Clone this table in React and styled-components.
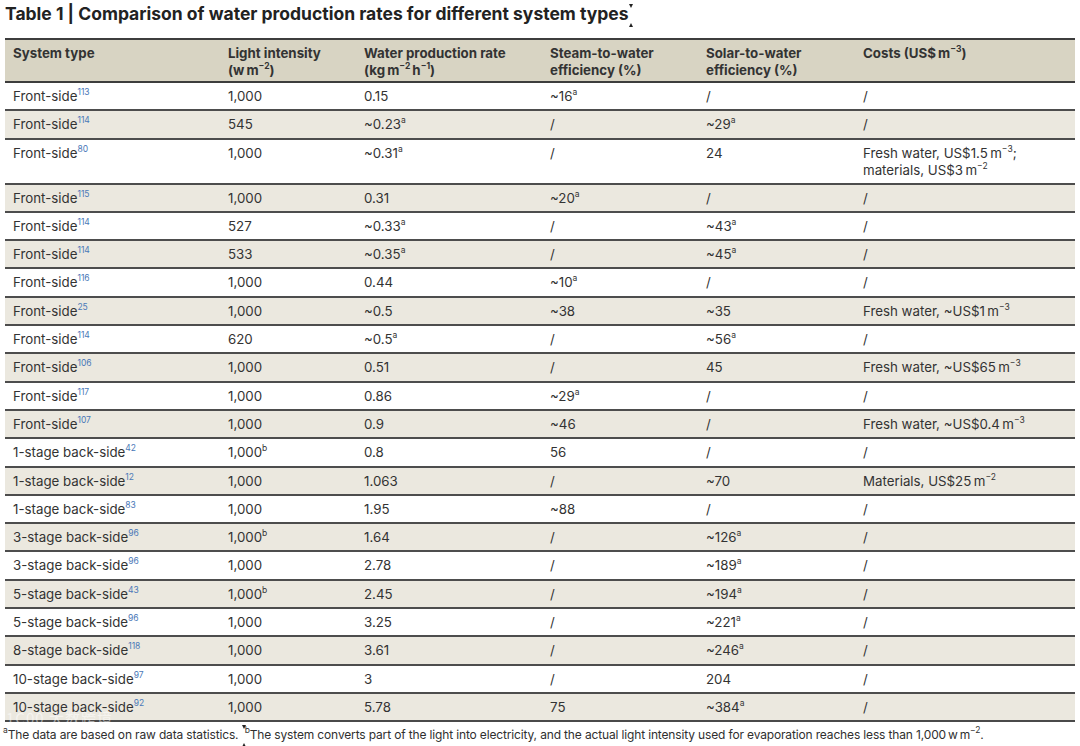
import React from "react";
import styled, { createGlobalStyle } from "styled-components";

const Global = createGlobalStyle`
  body {
    margin: 0;
    background: #ffffff;
    font-family: Inter, "Liberation Sans", Arial, sans-serif;
    color: #2f2f2f;
  }
`;

const Page = styled.div`
  position: relative;
  width: 1080px;
  height: 746px;
  padding: 0 5px;
  box-sizing: border-box;
  overflow: hidden;
`;

const Title = styled.h1`
  margin: 0;
  padding-top: 3px;
  height: 38px;
  box-sizing: border-box;
  font-size: 17.5px;
  font-weight: 700;
  color: #222;
`;

const Anchor = styled.span`
  position: relative;
  display: inline-block;
  width: ${(p) => p.w || 0}px;
  height: 1px;
`;

const Marker = styled.span`
  position: absolute;
  left: 0;
  top: ${(p) => p.y}px;
  width: 0;
  height: 0;
  border-left: 2.5px solid transparent;
  border-right: 2.5px solid transparent;
  ${(p) =>
    p.up
      ? "border-bottom: 4px solid #222;"
      : "border-top: 4px solid #222;"}
`;

const Table = styled.table`
  width: 1070px;
  border-collapse: collapse;
  table-layout: fixed;
  font-size: 13.3px;
  border-bottom: 2px solid #4a4a4a;
`;

const HeadRow = styled.tr`
  background: #d8d4c3;
  border-top: 2px solid #3d3d3d;
  border-bottom: 2px solid #3d3d3d;
`;

const Th = styled.th`
  text-align: left;
  vertical-align: top;
  font-weight: 700;
  color: #333;
  padding: 5px 6px 0 8px;
  height: 36px;
  line-height: 17px;
`;

const Row = styled.tr`
  background: ${(p) => (p.shaded ? "#ebe8df" : "#ffffff")};
  border-top: 2px solid #4d4d4d;
`;

const Td = styled.td`
  vertical-align: top;
  padding: 5px 6px 4px 8px;
  height: 17.3px;
  line-height: 17px;
  color: #333;
`;

const Ref = styled.sup`
  font-size: 8.5px;
  line-height: 0;
  color: #4a78b8;
  vertical-align: 6px;
`;

const Note = styled.sup`
  font-size: 8.5px;
  line-height: 0;
  vertical-align: 6px;
`;

const Footer = styled.p`
  margin: 5px 0 0 -2px;
  font-size: 12px;
  color: #2f2f2f;
  letter-spacing: -0.15px;
  white-space: nowrap;
`;

const Watermark = styled.span`
  position: absolute;
  left: 6px;
  top: 707px;
  font-family: "Noto Sans CJK SC", sans-serif;
  font-size: 15px;
  color: rgba(255, 255, 255, 0.5);
  letter-spacing: 1px;
  pointer-events: none;
`;

const S = ({ children }) => <Note>{children}</Note>;

const rows = [
  ["Front-side", "113", "1,000", "0.15", <>~16<S>a</S></>, "/", "/"],
  ["Front-side", "114", "545", <>~0.23<S>a</S></>, "/", <>~29<S>a</S></>, "/"],
  ["Front-side", "80", "1,000", <>~0.31<S>a</S></>, "/", "24",
    <>Fresh water, US$1.5{"\u2009"}m<S>−3</S>;<br />materials, US$3{"\u2009"}m<S>−2</S></>],
  ["Front-side", "115", "1,000", "0.31", <>~20<S>a</S></>, "/", "/"],
  ["Front-side", "114", "527", <>~0.33<S>a</S></>, "/", <>~43<S>a</S></>, "/"],
  ["Front-side", "114", "533", <>~0.35<S>a</S></>, "/", <>~45<S>a</S></>, "/"],
  ["Front-side", "116", "1,000", "0.44", <>~10<S>a</S></>, "/", "/"],
  ["Front-side", "25", "1,000", "~0.5", "~38", "~35", <>Fresh water, ~US$1{"\u2009"}m<S>−3</S></>],
  ["Front-side", "114", "620", <>~0.5<S>a</S></>, "/", <>~56<S>a</S></>, "/"],
  ["Front-side", "106", "1,000", "0.51", "/", "45", <>Fresh water, ~US$65{"\u2009"}m<S>−3</S></>],
  ["Front-side", "117", "1,000", "0.86", <>~29<S>a</S></>, "/", "/"],
  ["Front-side", "107", "1,000", "0.9", "~46", "/", <>Fresh water, ~US$0.4{"\u2009"}m<S>−3</S></>],
  ["1-stage back-side", "42", <>1,000<S>b</S></>, "0.8", "56", "/", "/"],
  ["1-stage back-side", "12", "1,000", "1.063", "/", "~70", <>Materials, US$25{"\u2009"}m<S>−2</S></>],
  ["1-stage back-side", "83", "1,000", "1.95", "~88", "/", "/"],
  ["3-stage back-side", "96", <>1,000<S>b</S></>, "1.64", "/", <>~126<S>a</S></>, "/"],
  ["3-stage back-side", "96", "1,000", "2.78", "/", <>~189<S>a</S></>, "/"],
  ["5-stage back-side", "43", <>1,000<S>b</S></>, "2.45", "/", <>~194<S>a</S></>, "/"],
  ["5-stage back-side", "96", "1,000", "3.25", "/", <>~221<S>a</S></>, "/"],
  ["8-stage back-side", "118", "1,000", "3.61", "/", <>~246<S>a</S></>, "/"],
  ["10-stage back-side", "97", "1,000", "3", "/", "204", "/"],
  ["10-stage back-side", "92", "1,000", "5.78", "75", <>~384<S>a</S></>, "/"],
];

const widths = [215, 136, 186, 156, 157, 220];

export default function App() {
  return (
    <Page>
      <Global />
      <Title>
        Table 1 | Comparison of water production rates for different system types
        <Anchor w={4}>
          <Marker y={-15} />
          <Marker y={4} up />
        </Anchor>
      </Title>
      <Table>
        <colgroup>
          {widths.map((w, i) => (
            <col key={i} style={{ width: w }} />
          ))}
        </colgroup>
        <thead>
          <HeadRow>
            <Th>System type</Th>
            <Th>
              Light intensity
              <br />
              (w{"\u2009"}m<S>−2</S>)
            </Th>
            <Th>
              Water production rate
              <br />
              (kg{"\u2009"}m<S>−2</S>{"\u2009"}h<S>−1</S>)
            </Th>
            <Th>
              Steam-to-water
              <br />
              efficiency (%)
            </Th>
            <Th>
              Solar-to-water
              <br />
              efficiency (%)
            </Th>
            <Th>
              Costs (US${"\u2009"}m<S>−3</S>)
            </Th>
          </HeadRow>
        </thead>
        <tbody>
          {rows.map((r, i) => (
            <Row key={i} shaded={i % 2 === 1}>
              <Td>
                {r[0]}
                <Ref>{r[1]}</Ref>
              </Td>
              <Td>{r[2]}</Td>
              <Td>{r[3]}</Td>
              <Td>{r[4]}</Td>
              <Td>{r[5]}</Td>
              <Td>{r[6]}</Td>
            </Row>
          ))}
        </tbody>
      </Table>
      <Footer>
        <S>a</S>The data are based on raw data statistics.{" "}
        <Anchor w={3}>
          <Marker y={-13} />
          <Marker y={5} up />
        </Anchor>
        <S>b</S>The system converts part of the light into electricity, and the
        actual light intensity used for evaporation reaches less than 1,000{"\u2009"}w{"\u2009"}m<S>−2</S>.
      </Footer>
      <Watermark>1C00 大数跨境</Watermark>
    </Page>
  );
}
